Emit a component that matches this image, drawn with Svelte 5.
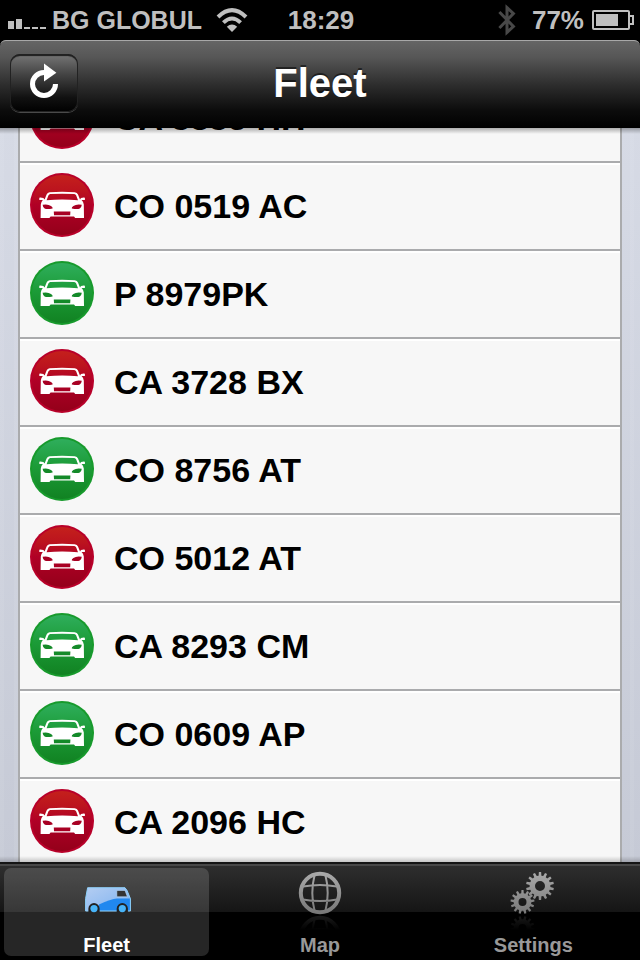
<script>
import { onMount } from 'svelte'

const vehicles = [
  { plate: 'CA 3835 HH', moving: false },
  { plate: 'CO 0519 AC', moving: false },
  { plate: 'P 8979PK', moving: true },
  { plate: 'CA 3728 BX', moving: false },
  { plate: 'CO 8756 AT', moving: true },
  { plate: 'CO 5012 AT', moving: false },
  { plate: 'CA 8293 CM', moving: true },
  { plate: 'CO 0609 AP', moving: true },
  { plate: 'CA 2096 HC', moving: false }
]

const tabs = ['Fleet', 'Map', 'Settings']
let active = $state('Fleet')
let scroller

// toothed wheel with a round hole, drawn with evenodd
function gear(cx, cy, outer, inner, hole, teeth) {
  const step = (Math.PI * 2) / teeth
  const pt = (r, a) => (cx + r * Math.sin(a)).toFixed(2) + ' ' + (cy - r * Math.cos(a)).toFixed(2)
  let d = ''
  for (let i = 0; i < teeth; i++) {
    const a = i * step
    d += (i ? 'L' : 'M') + pt(inner, a - step * 0.3) + 'L' + pt(outer, a - step * 0.18)
    d += 'L' + pt(outer, a + step * 0.18) + 'L' + pt(inner, a + step * 0.3)
  }
  d += `Z M${cx - hole} ${cy} a${hole} ${hole} 0 1 0 ${hole * 2} 0 a${hole} ${hole} 0 1 0 ${-hole * 2} 0Z`
  return d
}

const bigGear = gear(31, 18, 14, 10.4, 5, 14)
const smallGear = gear(13.5, 34, 12, 8.8, 4, 13)

onMount(() => {
  scroller.scrollTop = 53
})
</script>

{#snippet car(moving)}
  <svg class="car" viewBox="0 0 64 64" aria-hidden="true">
    <circle cx="32" cy="32" r="32" fill={moving ? '#179a2c' : '#b80029'} />
    <circle cx="32" cy="32" r="30" fill={moving ? 'url(#green)' : 'url(#red)'} />
    <path fill="#fff" fill-rule="evenodd" d="M19.6 19.2Q32 18.4 44.8 19.2Q47.2 19.4 48 21.6L50 26.4L51 25Q54 24 54.9 24.8V27H51.6Q53.4 28.6 53.8 31.6L54 45H45.2L44 43.6H20.6L19.4 45H10.6L10.8 31.6Q11.2 28.6 12.8 27H9.3V24.8Q10 24 13.4 25L14.6 26.4L16.6 21.6Q17.4 19.4 19.6 19.2ZM20.4 21Q19 21.2 18.4 22.6L16.6 27.2Q32 25.8 48 27.2L46.2 22.6Q45.6 21.2 44.2 21Q32 20.4 20.4 21Z" />
    <g fill={moving ? '#148a29' : '#a80023'}>
      <path d="M12.6 31.8Q18 30.8 21 33Q23 34.4 22.6 35.4Q17 36.6 14.6 35.4Q12.8 34.2 12.6 31.8Z" />
      <path d="M51.8 31.8Q46.4 30.8 43.4 33Q41.4 34.4 41.8 35.4Q47.4 36.6 49.8 35.4Q51.6 34.2 51.8 31.8Z" />
      <path d="M23.8 38.4H40.4L40.2 42.2H24Z" />
    </g>
  </svg>
{/snippet}

{#snippet globe()}
  <g fill="none" stroke="url(#metal)" stroke-width="2">
    <circle cx="24" cy="25" r="19.2" stroke-width="4" />
    <path d="M18.6 7Q14 25 18.6 43M29.4 7Q34 25 29.4 43M7 18.6Q24 15.4 41 18.6M7 31.4Q24 34.6 41 31.4" />
  </g>
{/snippet}

{#snippet gears()}
  <path d={bigGear} fill="url(#metal)" fill-rule="evenodd" />
  <path d={smallGear} fill="url(#metal)" fill-rule="evenodd" />
{/snippet}

<svg class="defs" aria-hidden="true">
  <defs>
    <linearGradient id="red" x1="0" y1="0" x2="0" y2="1">
      <stop offset="0" stop-color="#c4201c" />
      <stop offset=".25" stop-color="#bc141e" />
      <stop offset=".5" stop-color="#b00026" />
      <stop offset="1" stop-color="#94001a" />
    </linearGradient>
    <linearGradient id="green" x1="0" y1="0" x2="0" y2="1">
      <stop offset="0" stop-color="#2fae5c" />
      <stop offset=".45" stop-color="#1c9c38" />
      <stop offset="1" stop-color="#118222" />
    </linearGradient>
    <linearGradient id="metal" gradientUnits="userSpaceOnUse" x1="0" y1="4" x2="0" y2="46">
      <stop offset="0" stop-color="#aaa" />
      <stop offset="1" stop-color="#777" />
    </linearGradient>
    <linearGradient id="van-top" x1="0" y1="0" x2="1" y2="1">
      <stop offset="0" stop-color="#b4cdf2" />
      <stop offset="1" stop-color="#7db2f0" />
    </linearGradient>
    <linearGradient id="fade" x1="0" y1="0" x2="0" y2="1">
      <stop offset="0" stop-color="#fff" stop-opacity=".22" />
      <stop offset="1" stop-color="#fff" stop-opacity="0" />
    </linearGradient>
    <mask id="mirror" maskUnits="userSpaceOnUse" x="0" y="47" width="48" height="15">
      <rect x="0" y="47" width="48" height="15" fill="url(#fade)" />
    </mask>
  </defs>
</svg>

<div class="app">
  <div class="status">
    <div class="left">
      <svg width="38" height="10" viewBox="0 0 38 10" fill="#bfbfbf" aria-hidden="true">
        <path d="M0 2h6v8H0zM8 0h6v10H8zM16 8h6v2h-6zM24 8h6v2h-6zM32 8h6v2h-6z" />
      </svg>
      <span class="carrier">BG GLOBUL</span>
      <svg class="wifi" width="32" height="24" viewBox="0 0 32 24" fill="none" stroke="#bfbfbf" stroke-width="4" aria-hidden="true">
        <path d="M2 9Q16 -4.6 30 9" />
        <path d="M7.4 14.6Q16 6.4 24.6 14.6" />
        <path d="M16 24L10.8 18.8Q16 14.4 21.2 18.8Z" fill="#bfbfbf" stroke="none" />
      </svg>
    </div>
    <time>18:29</time>
    <div class="right">
      <svg class="bluetooth" width="18" height="32" viewBox="0 0 18 32" fill="none" stroke="#484848" stroke-width="3" aria-hidden="true">
        <path d="M1.4 8L15.4 22.4L9 28.4V3.6L15.4 9.6L1.4 24" />
      </svg>
      <span>77%</span>
      <svg width="42" height="20" viewBox="0 0 42 20" aria-hidden="true">
        <rect x="1" y="1" width="36" height="18" rx="1" fill="none" stroke="#bfbfbf" stroke-width="2" />
        <path d="M38 6h3v8h-3" fill="none" stroke="#bfbfbf" stroke-width="2" />
        <rect x="4" y="4" width="22" height="12" fill="#bfbfbf" />
      </svg>
    </div>
  </div>

  <header>
    <button class="reload" aria-label="Refresh">
      <svg width="32" height="44" viewBox="0 0 32 44" aria-hidden="true">
        <path d="M27.5 23A11.5 11.5 0 1 1 16 11.5" fill="none" stroke="#fff" stroke-width="5" />
        <path d="M16 2.6L28.4 11.8L16 20.4Z" fill="#fff" />
      </svg>
    </button>
    <h1>Fleet</h1>
  </header>

  <main>
    <div class="scroller" bind:this={scroller}>
      <ul>
        {#each vehicles as { plate, moving } (plate)}
          <li>
            {@render car(moving)}
            <span>{plate}</span>
          </li>
        {/each}
      </ul>
    </div>
  </main>

  <nav>
    {#each tabs as tab (tab)}
      <button class="tab" class:active={active === tab} onclick={() => (active = tab)}>
        <svg width="48" height="66" viewBox="0 0 48 66" aria-hidden="true">
          {#if tab === 'Fleet'}
            <path d="M4.6 19.6H42L44 22.4L47.4 30.6V43H2.6V30.6Z" fill="url(#van-top)" />
            <path d="M16 36.4Q28 31 34 30.6H47.4V43H14Z" fill="#2188ef" />
            <path d="M4.6 19.8H42L44 22.4L47.4 30.6V43H2.6V30.6Z" fill="none" stroke="#8cd0fb" />
            <path d="M33.8 22.4H42L44.4 28.8H33.8Z" fill="#343434" stroke="#b8dcff" stroke-width=".6" />
            <path d="M5.4 44V40.6a5.6 5.6 0 0 1 11.2 0V44ZM33.7 44V40.6a5.6 5.6 0 0 1 11.2 0V44Z" fill="#222" />
            <circle cx="11" cy="40.6" r="3.6" fill="#48b4f8" />
            <circle cx="39.3" cy="40.6" r="3.6" fill="#48b4f8" />
          {:else if tab === 'Map'}
            {@render globe()}
            <g mask="url(#mirror)"><g transform="translate(0 94) scale(1 -1)">{@render globe()}</g></g>
          {:else}
            {@render gears()}
            <g mask="url(#mirror)"><g transform="translate(0 94) scale(1 -1)">{@render gears()}</g></g>
          {/if}
        </svg>
        <span>{tab}</span>
      </button>
    {/each}
  </nav>
</div>

<style>
:global(body) {
  background: #000;
  font-family: "Liberation Sans", Arial, Helvetica, sans-serif;
  font-weight: bold;
}

.defs {
  position: absolute;
  width: 0;
  height: 0;
}

.app {
  display: flex;
  flex-direction: column;
  height: 100vh;
}

.status {
  display: grid;
  grid-template-columns: 1fr auto 1fr;
  align-items: center;
  height: 40px;
  padding: 0 6px 0 8px;
  color: #bfbfbf;
  font-size: 26px;
  line-height: 40px;
}

.left,
.right {
  display: flex;
  align-items: center;
}

.left {
  gap: 6px;
}

.left svg:first-child {
  margin-top: 8px;
}

.carrier {
  font-size: 25px;
}

.wifi {
  margin-left: 8px;
}

.right {
  justify-content: flex-end;
  gap: 8px;
}

.bluetooth {
  margin-right: 8px;
}

header {
  display: grid;
  grid-template-columns: 1fr auto 1fr;
  align-items: center;
  height: 88px;
  padding: 0 10px 2px;
  box-sizing: border-box;
  border-radius: 6px 6px 0 0;
  background: linear-gradient(#666, #565656 20%, #2c2c2c 52%, #0c0c0c 80%, #000);
  box-shadow: inset 0 2px 0 -1px #a8a8a8;
}

h1 {
  margin: 0;
  color: #fff;
  font-size: 40px;
  line-height: 48px;
  text-shadow: 0 -2px 0 rgba(0, 0, 0, .5);
}

button {
  border: 0;
  padding: 0;
  font: inherit;
}

.reload {
  display: flex;
  align-items: center;
  justify-content: center;
  width: 68px;
  height: 58px;
  border-radius: 10px;
  background: linear-gradient(#777, #444 35%, #111 75%, #000);
  box-shadow: inset 0 0 0 1px #222, inset 0 2px 1px #1c1c1c, 0 1px 0 #4a4a4a;
}

main {
  position: relative;
  flex: 1;
  min-height: 0;
  background: repeating-linear-gradient(90deg, rgba(255, 255, 255, .06) 0 4px, transparent 4px 14px), linear-gradient(#d6dae5, #c6cad6);
}

/* bars above and below throw a soft shade on the list */
main::after {
  content: "";
  position: absolute;
  inset: 0;
  pointer-events: none;
  background: linear-gradient(rgba(0, 0, 0, .3), transparent) top / 100% 6px no-repeat, linear-gradient(transparent, rgba(0, 0, 0, .2)) bottom / 100% 6px no-repeat;
}

.scroller {
  height: 100%;
  overflow-y: auto;
  scrollbar-width: none;
}

ul {
  margin: 0 18px;
  padding: 0;
  list-style: none;
  border: solid #aaabad;
  border-width: 0 2px;
  background: #f7f7f7;
}

li {
  display: flex;
  gap: 20px;
  height: 88px;
  box-sizing: border-box;
  padding: 10px;
  border-bottom: 2px solid #aaabad;
  box-shadow: inset 0 2px 0 #fff;
  font-size: 34px;
  line-height: 66px;
}

.car {
  flex: none;
  width: 64px;
  height: 64px;
}

nav {
  display: grid;
  grid-template-columns: repeat(3, 1fr);
  gap: 8px;
  height: 98px;
  box-sizing: border-box;
  padding: 6px 4px 4px;
  background: linear-gradient(#151515 0 2px, #484848 2px 4px, #2e2e2e 4px, #151515 50px, #000 50px);
}

.tab {
  display: flex;
  flex-direction: column;
  align-items: center;
  border-radius: 7px;
  background: none;
  color: #999;
  font-size: 20px;
  line-height: 22px;
}

.tab svg {
  flex: none;
}

.active {
  background: rgba(255, 255, 255, .15);
  color: #fff;
}
</style>
